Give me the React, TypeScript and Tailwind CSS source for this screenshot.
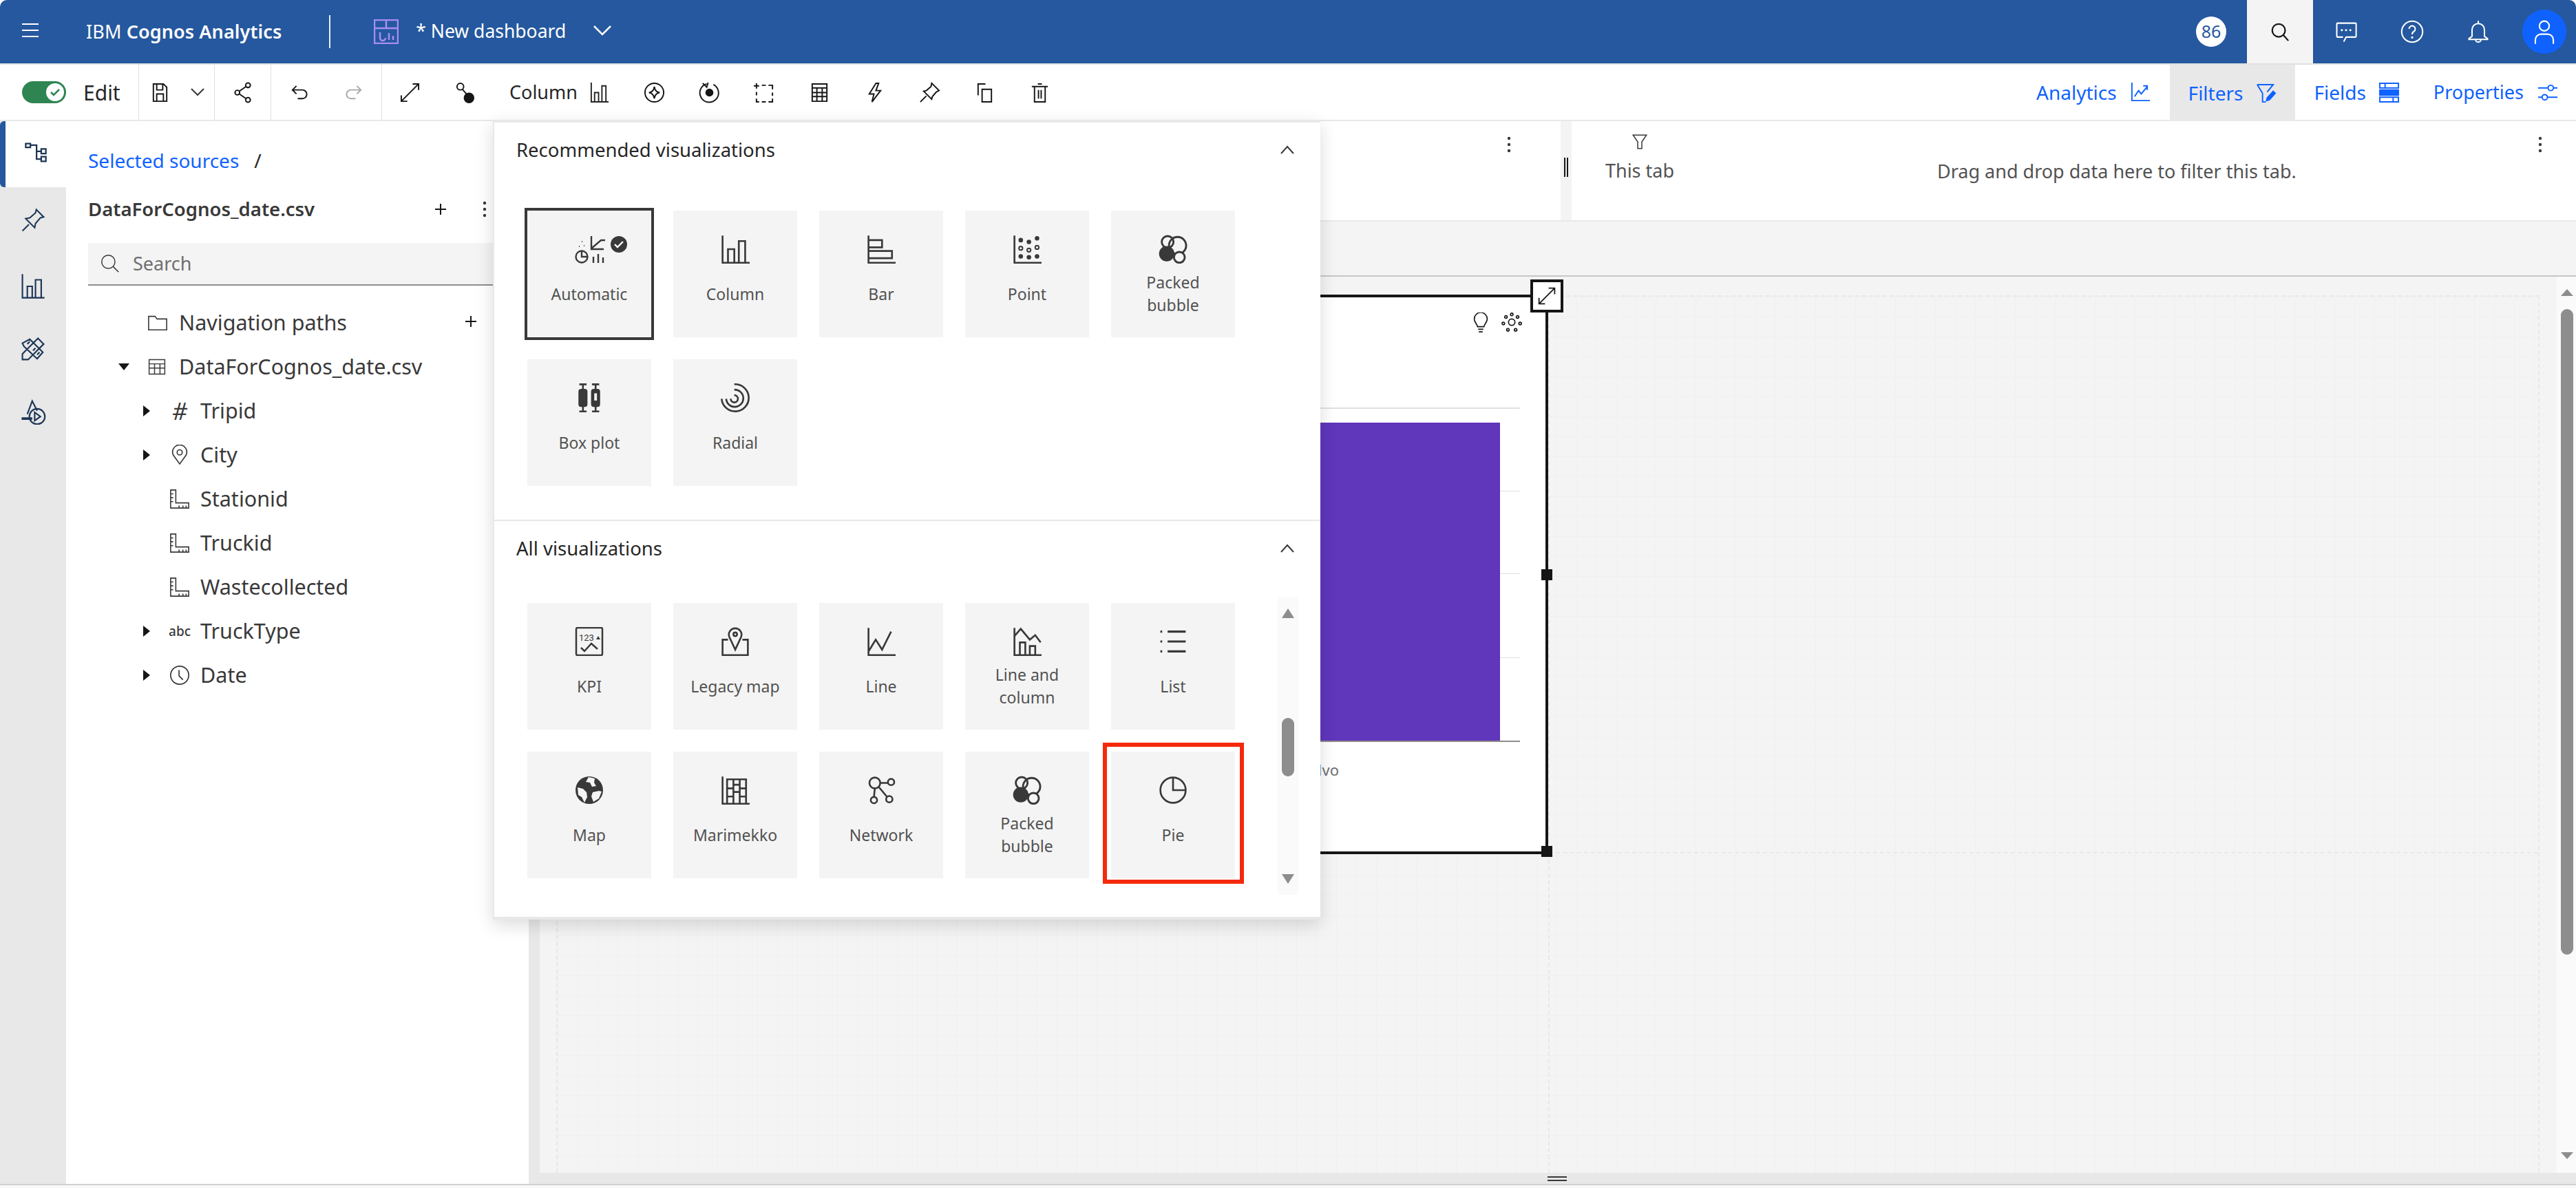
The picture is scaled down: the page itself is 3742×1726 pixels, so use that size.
import type { ReactNode } from "react";

function Ic({ size = 31, className = "", sw = 2, children }: { size?: number; className?: string; sw?: number; children: ReactNode }) {
  return (
    <svg
      width={size}
      height={size}
      viewBox="0 0 32 32"
      fill="none"
      stroke="currentColor"
      strokeWidth={sw}
      className={`shrink-0 ${className}`}
    >
      {children}
    </svg>
  );
}

function Dots() {
  return (
    <svg width="8" height="24" viewBox="0 0 8 24" className="shrink-0 text-[#393939]" fill="currentColor">
      <circle cx="4" cy="3" r="2.2" />
      <circle cx="4" cy="12" r="2.2" />
      <circle cx="4" cy="21" r="2.2" />
    </svg>
  );
}

function Plus() {
  return (
    <svg width="18" height="18" viewBox="0 0 18 18" stroke="#161616" strokeWidth="2" className="shrink-0">
      <path d="M9 1v16M1 9h16" />
    </svg>
  );
}

function ChevronUp() {
  return (
    <svg width="22" height="14" viewBox="0 0 22 14" fill="none" stroke="#393939" strokeWidth="2" className="shrink-0">
      <path d="M2 12l9-10 9 10" />
    </svg>
  );
}

const tbIcons: Record<string, ReactNode> = {
  save: <path d="M6 3h15l5 5v21H6zM11 3v9h9V3M11 29V18h10v11" />,
  share: (
    <>
      <circle cx="24" cy="5" r="3.5" />
      <circle cx="8" cy="16" r="3.5" />
      <circle cx="24" cy="27" r="3.5" />
      <path d="M11 14l10-7M11 18l10 7" />
    </>
  ),
  undo: <path d="M12 6l-6 6 6 6M6 12h15a5.500 5.500 0 0 1 0 13h-7" />,
  expand: <path d="M3 29L29 3M20 3h9v9M3 20v9h9" />,
  style: (
    <>
      <circle cx="9" cy="7" r="5" />
      <circle cx="22" cy="24" r="7" fill="currentColor" />
      <path d="M12 11l6 7" />
    </>
  ),
  column: <path d="M4 1v29h26M4 30h26M9 16h6v14H9zM20 6h6v24h-6z" />,
  insight: (
    <>
      <circle cx="16" cy="16" r="14" />
      <path d="M16 7q1 8 8 9q-7 1-8 9q-1-8-8-9q7-1 8-9z" />
    </>
  ),
  target: (
    <>
      <path d="M22 4a14 14 0 1 1-10-1M6 2l6 6 2-7" />
      <circle cx="16" cy="16" r="6" fill="currentColor" stroke="none" />
    </>
  ),
  select: <path d="M4 2v8M0 6h8M12 5h6M22 5h6v6M28 16v5M28 25v5h-6M18 30h-6M8 30H4v-5M4 20v-5" />,
  table: <path d="M5 3h22v26H5zM5 9h22M5 16h22M5 22h22M12 9v20M20 9v20" />,
  bolt: <path d="M18 2l-10 16h7l-3 12 13-17h-7l4-11z" />,
  pin: <path d="M19 2l11 11-4 2-6 7-1 4-12-12 4-1 7-6zM11 21l-9 9" />,
  copy: <path d="M12 11h14v19H12zM6 20V3h11" />,
  trash: <path d="M4 7h24M13 3h6M8 7v23h16V7M14 12v13M18 12v13" />,
};

function ToolBtn({ name, gray, width = "w-[80px]" }: { name: string; gray?: boolean; width?: string }) {
  return (
    <div className={`${width} flex items-center justify-center ${gray ? "text-[#a8a8a8]" : "text-[#161616]"}`}>
      <Ic className={name === "redo" ? "-scale-x-100" : ""}>{name === "redo" ? tbIcons.undo : tbIcons[name]}</Ic>
    </div>
  );
}

function Sep() {
  return <div className="w-px self-stretch bg-[#e0e0e0]" />;
}

function Header() {
  return (
    <div className="h-[92px] shrink-0 bg-[#25589e] text-white flex items-center rounded-t-[10px] relative">
      <svg width="26" height="22" viewBox="0 0 26 22" stroke="white" strokeWidth="2" className="ml-[31px] -mt-1">
        <path d="M1 2h24M1 11h24M1 20h24" />
      </svg>
      <div className="ml-[68px] text-[27px] tracking-[0.1px] whitespace-nowrap">
        IBM <span className="font-semibold">Cognos Analytics</span>
      </div>
      <div className="ml-[69px] w-[2px] h-[48px] bg-white/90" />
      <svg width="36" height="36" viewBox="0 0 36 36" fill="none" stroke="#a98bf5" strokeWidth="2.500" className="ml-[63px] shrink-0">
        <path d="M1 1h34v34H1zM1 13h34M18 1v12M9 19v8a4 4 0 0 0 8 0M22 20v10M28 24v6" />
      </svg>
      <div className="ml-[25px] text-[26.500px] whitespace-nowrap">* New dashboard</div>
      <svg width="26" height="16" viewBox="0 0 26 16" fill="none" stroke="white" strokeWidth="2.500" className="ml-[40px] -mt-1">
        <path d="M1 2l12 12 12-12" />
      </svg>
      <div className="ml-auto flex items-center self-stretch">
        <div className="w-[44px] h-[44px] rounded-full bg-white text-[#25589e] text-[25px] flex items-center justify-center mr-[30px]">
          86
        </div>
        <div className="w-[96px] self-stretch bg-[#f4f4f4] flex items-center justify-center text-[#161616]">
          <Ic size={30} sw={2.400}>
            <circle cx="14" cy="14" r="10" />
            <path d="M21 21l8 9" />
          </Ic>
        </div>
        <div className="w-[95px] flex justify-center">
          <Ic size={36} sw={1.800}>
            <path d="M5 5h23a1 1 0 0 1 1 1v16a1 1 0 0 1-1 1H16l-3 6M12 23H5a1 1 0 0 1-1-1V6a1 1 0 0 1 1-1" />
            <circle cx="10.500" cy="14" r="1.400" fill="white" stroke="none" />
            <circle cx="16" cy="14" r="1.400" fill="white" stroke="none" />
            <circle cx="21.500" cy="14" r="1.400" fill="white" stroke="none" />
          </Ic>
        </div>
        <div className="w-[97px] flex justify-center">
          <Ic size={36} sw={1.800}>
            <circle cx="16" cy="16" r="13.500" />
            <path d="M12 12.500a4 4 0 1 1 6 3.500q-2 1-2 3.500" />
            <circle cx="16" cy="23.500" r="1.400" fill="white" stroke="none" />
          </Ic>
        </div>
        <div className="w-[96px] flex justify-center">
          <Ic size={36} sw={1.800}>
            <path d="M16 2v3M8 22v-8.500a8 8 0 0 1 16 0V22l4 3v1H4v-1zM12.500 26a3.500 3.500 0 0 0 7 0" />
          </Ic>
        </div>
        <div className="w-[64px] h-[64px] rounded-full bg-[#0f62fe] flex items-center justify-center mr-[14px] ml-[16px]">
          <Ic size={38} sw={1.800}>
            <circle cx="16" cy="9" r="6" />
            <path d="M5 31v-5a7 7 0 0 1 7-7h8a7 7 0 0 1 7 7v5" />
          </Ic>
        </div>
      </div>
    </div>
  );
}

function Toolbar() {
  return (
    <div className="h-[84px] shrink-0 bg-white border-t-2 border-t-[#e0e0e0] border-b-2 border-b-[#e8e8e8] flex items-stretch">
      <div className="flex items-center pl-[32px] w-[201px]">
        <div className="w-[64px] h-[32px] rounded-full bg-[#2f8552] flex items-center justify-end pr-[3px]">
          <div className="w-[26px] h-[26px] rounded-full bg-white flex items-center justify-center">
            <svg width="16" height="16" viewBox="0 0 16 16" fill="none" stroke="#2f8552" strokeWidth="2.500">
              <path d="M2 8l4 4 8-8" />
            </svg>
          </div>
        </div>
        <div className="ml-[25px] text-[30px] text-[#262626]">Edit</div>
      </div>
      <Sep />
      <ToolBtn name="save" width="w-[61px]" />
      <div className="w-[48px] flex items-center justify-center text-[#393939]">
        <svg width="20" height="12" viewBox="0 0 20 12" fill="none" stroke="currentColor" strokeWidth="2">
          <path d="M1 1l9 9 9-9" />
        </svg>
      </div>
      <Sep />
      <ToolBtn name="share" width="w-[81px]" />
      <Sep />
      <ToolBtn name="undo" />
      <ToolBtn name="redo" gray />
      <Sep />
      <ToolBtn name="expand" />
      <ToolBtn name="style" />
      <div className="flex items-center pl-[25px] w-[195px] text-[#262626]">
        <span className="text-[27px] w-[115px] whitespace-nowrap">Column</span>
        <Ic>{tbIcons.column}</Ic>
      </div>
      <ToolBtn name="insight" />
      <ToolBtn name="target" />
      <ToolBtn name="select" />
      <ToolBtn name="table" />
      <ToolBtn name="bolt" />
      <ToolBtn name="pin" />
      <ToolBtn name="copy" />
      <ToolBtn name="trash" />
      <div className="ml-auto flex items-stretch text-[#0f62fe] text-[28px] whitespace-nowrap">
        <div className="flex items-center gap-[18px] pr-[28px]">
          <span>Analytics</span>
          <Ic>
            <path d="M4 1v27h27M8 22l6-9 4 5 9-11M21 6h6v6" />
          </Ic>
        </div>
        <div className="flex items-center gap-[18px] px-[27px] bg-[#e8e8e8] -mb-[2px]">
          <span>Filters</span>
          <Ic>
            <path d="M3 3h24l-9 11M11 16L3 3M11 16v13h5" />
            <path d="M27 13l3 3-9 10-4 1 1-4z" fill="currentColor" />
          </Ic>
        </div>
        <div className="flex items-center gap-[18px] pl-[27px] pr-[49px]">
          <span>Fields</span>
          <Ic>
            <path d="M2 2h28v7H2zM10 2v7M2 23h28v7H2zM22 23v7" />
            <rect x="1" y="11" width="30" height="10" rx="1" fill="currentColor" stroke="none" />
          </Ic>
        </div>
        <div className="flex items-center gap-[19px] pr-[26px] text-[27px]">
          <span>Properties</span>
          <Ic>
            <path d="M2 9h15M25 9h6M2 23h6M16 23h15" />
            <circle cx="21" cy="9" r="4" />
            <circle cx="12" cy="23" r="4" />
          </Ic>
        </div>
      </div>
    </div>
  );
}

function Rail() {
  return (
    <div className="w-[96px] shrink-0 bg-[#e8e8e8] text-[#1c3557] flex flex-col items-center">
      <div className="w-full h-[96px] bg-white border-l-[8px] border-l-[#25589e] rounded-l-[6px] flex items-center justify-center shrink-0 pb-[4px]">
        <Ic size={36}>
          <path d="M3 4h6v5H3zM9 6h8v18h6M17 14h6M23 11h6v6h-6zM23 21h6v6h-6z" />
        </Ic>
      </div>
      <div className="mt-[29px]">
        <Ic size={38} sw={1.700}>
          <path d="M20 3l9 9-4 1-6 7-1 5-11-11 5-1 7-6zM11 21l-8 8" />
        </Ic>
      </div>
      <div className="mt-[58px]">
        <Ic size={38} sw={1.800}>
          <path d="M3 1v29h27M9 16h6v14H9zM19 8h7v22h-7z" />
        </Ic>
      </div>
      <div className="mt-[53px]">
        <Ic size={38} sw={1.800}>
          <path d="M3 9l9-5 16 16-7 8L5 13zM22 3l7 7-19 19H3v-7zM9 10l3-3M16 18l3-3M21 23l3-3" />
        </Ic>
      </div>
      <div className="mt-[53px]">
        <Ic size={38} sw={1.800}>
          <path d="M9 19L15 3l6 12M3 25h10" />
          <rect x="2" y="23" width="13" height="3" fill="currentColor" stroke="none" />
          <circle cx="21" cy="22" r="9.500" />
          <path d="M18 17l7 5-7 5z" />
        </Ic>
      </div>
    </div>
  );
}

function Caret({ open }: { open?: boolean }) {
  return open ? (
    <svg width="16" height="10" viewBox="0 0 16 10" fill="#161616" className="shrink-0">
      <path d="M0 0h16L8 10z" />
    </svg>
  ) : (
    <svg width="10" height="16" viewBox="0 0 10 16" fill="#161616" className="shrink-0">
      <path d="M0 0l10 8-10 8z" />
    </svg>
  );
}

const Ruler = (
  <Ic size={30} sw={1.700}>
    <path d="M2 2h8v20h20v8H2zM2 8h4M2 14h4M2 20h4M15 26v4M21 26v4M26 26v4" />
  </Ic>
);

const fields: { label: string; caret: boolean; icon: ReactNode }[] = [
  { label: "Tripid", caret: true, icon: <span className="text-[34px] italic leading-none text-[#393939]">#</span> },
  {
    label: "City",
    caret: true,
    icon: (
      <Ic size={30} sw={1.800}>
        <path d="M16 30L6 16a11 11 0 1 1 20 0z" />
        <circle cx="16" cy="12" r="4" />
      </Ic>
    ),
  },
  { label: "Stationid", caret: false, icon: Ruler },
  { label: "Truckid", caret: false, icon: Ruler },
  { label: "Wastecollected", caret: false, icon: Ruler },
  { label: "TruckType", caret: true, icon: <span className="text-[19px] font-medium leading-none">abc</span> },
  {
    label: "Date",
    caret: true,
    icon: (
      <Ic size={30} sw={1.800}>
        <circle cx="16" cy="16" r="14" />
        <path d="M15 8v9l6 6" />
      </Ic>
    ),
  },
];

function Sidebar() {
  return (
    <div className="w-[672px] shrink-0 bg-white text-[#393939] pl-[32px] flex flex-col">
      <div className="h-[64px] mt-[25px] flex items-center text-[28px]">
        <span className="text-[#0f62fe]">Selected sources</span>
        <span className="ml-[22px] text-[#262626]">/</span>
      </div>
      <div className="h-[50px] mt-[14px] flex items-center relative">
        <span className="text-[27.500px] font-semibold">DataForCognos_date.csv</span>
        <div className="absolute left-[503px]">
          <Plus />
        </div>
        <div className="absolute left-[572px]">
          <Dots />
        </div>
      </div>
      <div className="h-[62px] mt-[24px] bg-[#f4f4f4] border-b-2 border-b-[#8d8d8d] flex items-center pl-[18px] gap-[19px]">
        <Ic size={28} sw={1.700} className="text-[#393939]">
          <circle cx="13" cy="13" r="11" />
          <path d="M21 21l9 9" />
        </Ic>
        <span className="text-[27px] text-[#6f6f6f]">Search</span>
      </div>
      <div className="mt-[22px] flex flex-col text-[30.500px]">
        <div className="h-[64px] flex items-center relative pl-[86px]">
          <Ic size={30} sw={1.700}>
            <path d="M2 6h10l3 4h15v17H2z" />
          </Ic>
          <span className="ml-[16px]">Navigation paths</span>
          <div className="absolute left-[547px] -mt-[4px]">
            <Plus />
          </div>
        </div>
        <div className="h-[64px] flex items-center pl-[44px]">
          <Caret open />
          <div className="w-[26px]" />
          <Ic size={28} sw={1.700}>
            <path d="M3 4h26v24H3zM3 11h26M3 18h26M12 11v17M21 11v17" />
          </Ic>
          <span className="ml-[18px]">DataForCognos_date.csv</span>
        </div>
        {fields.map((f) => (
          <div key={f.label} className="h-[64px] flex items-center pl-[80px]">
            <div className="w-[38px]">{f.caret && <Caret />}</div>
            <div className="w-[30px] flex items-center justify-center">{f.icon}</div>
            <span className="ml-[15px]">{f.label}</span>
          </div>
        ))}
      </div>
    </div>
  );
}

function Bubbles() {
  return (
    <Ic size={42} sw={2.200}>
      <circle cx="10" cy="8" r="6.500" />
      <circle cx="21" cy="12" r="9.500" />
      <circle cx="9" cy="21" r="8.500" fill="currentColor" stroke="none" />
      <circle cx="23" cy="25" r="6" fill="#f4f4f4" />
    </Ic>
  );
}

const vizIcons: Record<string, ReactNode> = {
  Automatic: (
    <svg width="76" height="42" viewBox="0 0 76 42" fill="none" stroke="currentColor" strokeWidth="2.400">
      <path d="M24 2v19h18M24 20l14-12h6" />
      <path d="M10 10h1M6 17h1M13 16h1" strokeWidth="2" />
      <circle cx="10" cy="32" r="8.500" />
      <path d="M10 24v8h8" />
      <path d="M27 41v-9M34 41V28M41 41V33" />
      <circle cx="64" cy="14" r="12" fill="currentColor" stroke="none" />
      <path d="M58 14l4 4 8-8" stroke="white" />
    </svg>
  ),
  Column: (
    <Ic size={42}>
      <path d="M2 1v30h30M8 16h7v15H8zM20 7h7v24h-7z" />
    </Ic>
  ),
  Bar: (
    <Ic size={42}>
      <path d="M2 1v30h30M2 6h15v8H2zM2 18h26v8H2z" />
    </Ic>
  ),
  Point: (
    <Ic size={42}>
      <path d="M2 1v30h30" />
      <g fill="currentColor" stroke="none">
        <circle cx="9" cy="6" r="2.500" />
        <circle cx="27" cy="4" r="2.500" />
        <circle cx="18" cy="8" r="2.500" />
        <circle cx="9" cy="24" r="2.500" />
        <circle cx="18" cy="25" r="2.500" />
        <circle cx="27" cy="24" r="2.500" />
      </g>
      <g strokeWidth="1.500">
        <circle cx="9" cy="15" r="2" />
        <circle cx="18" cy="17" r="2" />
        <circle cx="27" cy="14" r="2" />
      </g>
    </Ic>
  ),
  "Packed bubble": <Bubbles />,
  "Box plot": (
    <Ic size={42}>
      <path d="M5 1h8M9 1v6M5 31h8M9 31v-6M19 1h8M23 1v6M19 31h8M23 31v-6" />
      <rect x="5" y="7" width="8" height="18" rx="2" fill="currentColor" />
      <rect x="19" y="7" width="8" height="18" rx="2" fill="currentColor" />
      <rect x="21.500" y="11" width="3" height="8" fill="#f4f4f4" stroke="none" />
    </Ic>
  ),
  Radial: (
    <Ic size={42}>
      <path d="M15 1a15 15 0 1 1-14 16M15 7a9.500 9.500 0 1 1-9 10M15 13a4 4 0 1 1-4 4" />
    </Ic>
  ),
  KPI: (
    <svg width="42" height="42" viewBox="0 0 42 42" fill="none" stroke="currentColor" strokeWidth="2.500">
      <rect x="2" y="1" width="38" height="40" rx="2" />
      <path d="M9 30l5 5 10-11 9 8" />
      <text x="6" y="20" fontSize="13" fill="currentColor" stroke="none" fontFamily="Roboto, sans-serif">
        123
      </text>
      <path d="M34 13l-3 5h6z" fill="currentColor" stroke="none" />
    </svg>
  ),
  "Legacy map": (
    <Ic size={42}>
      <path d="M16 25L9.500 11a7 7 0 1 1 13 0z" />
      <circle cx="16" cy="8" r="2" />
      <path d="M8 14H2v17h28V14h-6" />
    </Ic>
  ),
  Line: (
    <Ic size={42}>
      <path d="M2 1v30h30M2 27l8-13 7 11 10-20" />
    </Ic>
  ),
  "Line and column": (
    <Ic size={42}>
      <path d="M2 1v30h30M2 10l7-8 10 12 6-5 6 8M8 17h6v14H8zM19 21h6v10h-6z" />
    </Ic>
  ),
  List: (
    <Ic size={42} sw={2.400}>
      <path d="M10 5h20M10 16h20M10 27h20M2 5h2M2 16h2M2 27h2" />
    </Ic>
  ),
  Map: (
    <svg width="42" height="42" viewBox="0 0 42 42">
      <circle cx="21" cy="21" r="20" fill="currentColor" />
      <path d="M20 2l9 2-1 6 3 5-6 1-3-6-6-1zM4 17l8 2 5 5 1 7-4 8-4-8-5-3zM26 24l9-2 4 1-4 10-8 5-3-8z" fill="#f4f4f4" />
    </svg>
  ),
  Marimekko: (
    <Ic size={42}>
      <path d="M2 1v30h30M7 4h21v27H7zM14 4v27M21 4v27M7 14h7M7 23h7M14 10h7M14 18h7M21 14h7M21 23h7" />
    </Ic>
  ),
  Network: (
    <Ic size={42}>
      <circle cx="9" cy="8" r="6" />
      <circle cx="27" cy="7" r="3.500" />
      <circle cx="8" cy="27" r="3.500" />
      <circle cx="25" cy="26" r="3.500" />
      <path d="M15 8h9M9 14l-1 10M13 12l10 12" />
    </Ic>
  ),
  Pie: (
    <Ic size={42}>
      <circle cx="16" cy="16" r="14" />
      <path d="M16 2v14h14" />
    </Ic>
  ),
};

function Tile({ label, selected, marked }: { label: string; selected?: boolean; marked?: boolean }) {
  const lines = label === "Packed bubble" ? ["Packed", "bubble"] : label === "Line and column" ? ["Line and", "column"] : [label];
  return (
    <div
      className={`relative w-[180px] h-[184px] bg-[#f4f4f4] flex flex-col items-center pt-[35px] text-[#525252] ${
        selected ? "outline-[4px] outline-[#393939] outline-offset-0 text-[#393939]" : ""
      }`}
    >
      <div className={`h-[42px] flex justify-center text-[#393939] ${selected ? "ml-[34px]" : ""}`}>{vizIcons[label]}</div>
      <div className="h-[88px] flex flex-col items-center justify-center text-[23px] leading-[33px]">
        {lines.map((l) => (
          <span key={l} className="whitespace-nowrap">
            {l}
          </span>
        ))}
      </div>
      {marked && <div className="absolute -left-[12px] -right-[13px] -top-[13px] -bottom-[8px] border-[6px] border-[#f5290d] bg-transparent" />}
    </div>
  );
}

function Popover() {
  const recommended = ["Automatic", "Column", "Bar", "Point", "Packed bubble", "Box plot", "Radial"];
  const all = ["KPI", "Legacy map", "Line", "Line and column", "List", "Map", "Marimekko", "Network", "Packed bubble", "Pie"];
  return (
    <div className="absolute left-[716px] top-[174px] w-[1202px] h-[1162px] z-20 bg-white border-y-[4px] border-l-[2px] border-[#e8e8e8] shadow-[0_8px_24px_rgba(0,0,0,0.14)] text-[#262626]">
      <div className="h-[80px] flex items-center justify-between pl-[32px] pr-[37px] text-[27.500px]">
        <span>Recommended visualizations</span>
        <ChevronUp />
      </div>
      <div className="pl-[48px] pt-[48px] pb-[49px] grid grid-cols-[repeat(5,180px)] gap-[32px] border-b-2 border-b-[#e8e8e8]">
        {recommended.map((r) => (
          <Tile key={r} label={r} selected={r === "Automatic"} />
        ))}
      </div>
      <div className="h-[80px] flex items-center justify-between pl-[32px] pr-[37px] text-[27.500px]">
        <span>All visualizations</span>
        <ChevronUp />
      </div>
      <div className="relative pl-[48px] pt-[39px] grid grid-cols-[repeat(5,180px)] gap-[32px]">
        {all.map((a) => (
          <Tile key={a} label={a} marked={a === "Pie"} />
        ))}
        <div className="absolute left-[1138px] top-[31px] w-[30px] h-[432px] bg-[#fafafa]">
          <svg width="18" height="14" viewBox="0 0 18 14" fill="#8d8d8d" className="absolute left-[6px] top-[16px]">
            <path d="M9 0l9 14H0z" />
          </svg>
          <div className="absolute left-[6px] top-[175px] w-[18px] h-[85px] rounded-full bg-[#8d8d8d]" />
          <svg width="18" height="14" viewBox="0 0 18 14" fill="#8d8d8d" className="absolute left-[6px] top-[402px]">
            <path d="M0 0h18L9 14z" />
          </svg>
        </div>
      </div>
    </div>
  );
}

function Widget() {
  return (
    <div className="absolute left-[100px] -top-[3px] w-[1339px] h-[813px] bg-white border-[4px] border-[#161616]">
      {/* coordinates inside the widget follow the chart on the reference */}
      <div className="absolute left-[1222px] top-[22px] text-[#161616]">
        <Ic size={30} sw={1.800}>
          <path d="M11 22c0-4-5-6-5-12a10 10 0 0 1 20 0c0 6-5 8-5 12zM12 26h8M13 30h6" />
        </Ic>
      </div>
      <div className="absolute left-[1267px] top-[22px] text-[#161616]">
        <Ic size={30} sw={1.800}>
          <circle cx="16" cy="15" r="5" />
          <circle cx="16" cy="3" r="2" />
          <circle cx="7" cy="7" r="2" />
          <circle cx="25" cy="7" r="2" />
          <circle cx="3" cy="17" r="2" />
          <circle cx="29" cy="17" r="2" />
          <circle cx="10" cy="27" r="2" />
          <circle cx="22" cy="27" r="2" />
        </Ic>
      </div>
      <div className="absolute left-[100px] top-[160px] w-[1194px] h-[2px] bg-[#e0e0e0]" />
      <div className="absolute left-[100px] top-[281px] w-[1194px] h-px bg-[#e0e0e0]" />
      <div className="absolute left-[100px] top-[401px] w-[1194px] h-px bg-[#e0e0e0]" />
      <div className="absolute left-[100px] top-[523px] w-[1194px] h-px bg-[#e0e0e0]" />
      <div className="absolute left-[100px] top-[182px] w-[1165px] h-[462px] bg-[#6036bb]" />
      <div className="absolute left-[100px] top-[644px] w-[1194px] h-[2px] bg-[#8d8d8d]" />
      <div className="absolute left-[919px] top-[670px] text-[22px] text-[#6f6f6f] whitespace-nowrap w-[112px] text-right">Volvo</div>
    </div>
  );
}

function Canvas() {
  return (
    <div className="flex-1 min-h-0 flex">
      <div className="w-[16px] bg-[#e8e8e8]" />
      <div className="flex-1 flex flex-col min-w-0">
        <div className="flex-1 min-h-0 flex">
          <div className="flex-1 bg-[#f4f4f4] pl-[24px] pr-[25px] pt-[27px] flex">
            <div className="relative flex-1 border-l-2 border-r-2 border-t-2 border-dashed border-[#e8e8e8] bg-[linear-gradient(to_right,#f0f0f0_1px,transparent_1px),linear-gradient(to_bottom,#f0f0f0_1px,transparent_1px)] bg-size-[29px_29px]">
              <div className="absolute left-[1439px] top-0 bottom-0 border-l-2 border-dashed border-[#e8e8e8]" />
              <div className="absolute left-0 right-0 top-[807px] border-t-2 border-dashed border-[#e8e8e8]" />
              <Widget />
              <div className="absolute left-[1413px] -top-[25px] w-[48px] h-[48px] bg-white border-[4px] border-[#161616] flex items-center justify-center text-[#161616] z-10">
                <Ic size={28} sw={2}>
                  <path d="M3 29L29 3M19 3h10v10M3 19v10h10" />
                </Ic>
              </div>
              <div className="absolute left-[1429px] top-[396px] w-[16px] h-[16px] bg-[#161616]" />
              <div className="absolute left-[1429px] top-[798px] w-[16px] h-[16px] bg-[#161616]" />
            </div>
          </div>
          <div className="w-[28px] bg-[#fafafa] relative">
            <svg width="18" height="10" viewBox="0 0 18 10" fill="#8d8d8d" className="absolute left-[6px] top-[18px]">
              <path d="M9 0l9 10H0z" />
            </svg>
            <div className="absolute left-[6px] top-[47px] w-[18px] h-[938px] rounded-full bg-[#8d8d8d]" />
            <svg width="18" height="10" viewBox="0 0 18 10" fill="#8d8d8d" className="absolute left-[6px] top-[1272px]">
              <path d="M0 0h18L9 10z" />
            </svg>
          </div>
        </div>
        <div className="h-[16px] shrink-0 bg-[#e8e8e8] flex items-center justify-center pr-[2px]">
          <div className="w-[28px] h-[7px] border-y-2 border-[#393939]" />
        </div>
      </div>
    </div>
  );
}

export default function App() {
  return (
    <div className="relative w-[3742px] h-[1726px] overflow-hidden bg-white font-['Noto_Sans',sans-serif] flex flex-col">
      <Header />
      <Toolbar />
      <div className="flex-1 min-h-0 flex">
        <Rail />
        <Sidebar />
        <div className="flex-1 min-w-0 flex flex-col">
          {/* Filter drop zones */}
          <div className="h-[146px] shrink-0 flex border-b-2 border-b-[#e8e8e8] bg-white">
            <div className="w-[1499px] flex justify-end items-start pr-[71px] pt-[22px]">
              <Dots />
            </div>
            <div className="w-[16px] bg-[#f4f4f4] flex items-center justify-center pb-[10px]">
              <div className="w-[6px] h-[28px] border-x-2 border-[#161616]" />
            </div>
            <div className="flex-1 flex relative">
              <div className="w-[198px] flex flex-col items-center pt-[18px] text-[#525252]">
                <Ic size={24} sw={2} className="text-[#393939]">
                  <path d="M3 3h26l-9 13v13h-8V16z" />
                </Ic>
                <span className="text-[27px] mt-[10px]">This tab</span>
              </div>
              <div className="pl-[333px] pt-[53px] text-[27px] text-[#525252] whitespace-nowrap">
                Drag and drop data here to filter this tab.
              </div>
              <div className="absolute right-[48px] top-[22px]">
                <Dots />
              </div>
            </div>
          </div>
          {/* Tab strip */}
          <div className="h-[80px] shrink-0 bg-[#f4f4f4] border-b-2 border-b-[#c6c6c6]" />
          <Canvas />
        </div>
      </div>
      <div className="h-[6px] shrink-0 bg-[#f8f8f8] border-t-2 border-t-[#d0d0d0]" />
      <Popover />
    </div>
  );
}
